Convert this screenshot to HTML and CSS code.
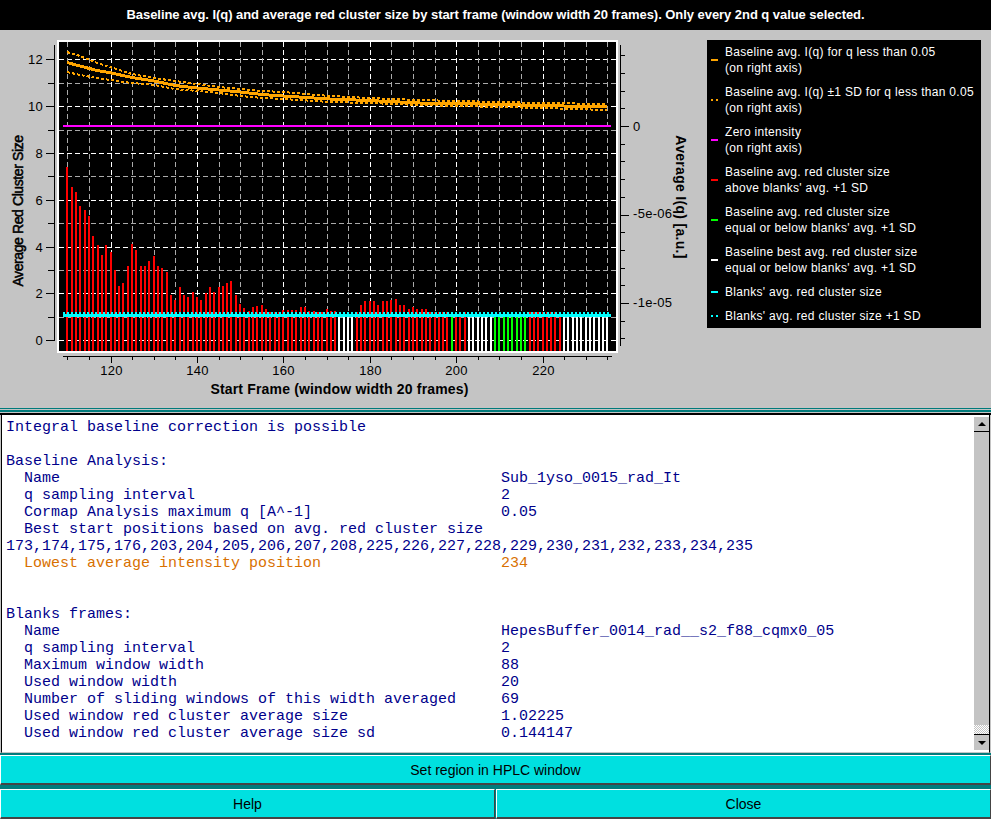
FILE: index.html
```html
<!DOCTYPE html>
<html>
<head>
    <title>Baseline analysis</title>
    <link rel="stylesheet" href="styles.css">
</head>
<body>
    <div class="window">
        <div class="title-bar">Baseline avg. I(q) and average red cluster size by start frame (window width 20 frames). Only every 2nd q value selected.</div>

        <div class="plot-panel">
            <svg id="chart" class="chart" width="700" height="378" viewBox="0 30 700 378"></svg>

            <div class="legend">
                <div class="legend-row"><span class="swatch swatch-orange"></span><span>Baseline avg. I(q) for q less than 0.05<br>(on right axis)</span></div>
                <div class="legend-row"><span class="swatch swatch-dots swatch-dots-orange"></span><span>Baseline avg. I(q) ±1 SD for q less than 0.05<br>(on right axis)</span></div>
                <div class="legend-row"><span class="swatch swatch-magenta"></span><span>Zero intensity<br>(on right axis)</span></div>
                <div class="legend-row"><span class="swatch swatch-red"></span><span>Baseline avg. red cluster size<br>above blanks' avg. +1 SD</span></div>
                <div class="legend-row"><span class="swatch swatch-green"></span><span>Baseline avg. red cluster size<br>equal or below blanks' avg. +1 SD</span></div>
                <div class="legend-row"><span class="swatch swatch-white"></span><span>Baseline best avg. red cluster size<br>equal or below blanks' avg. +1 SD</span></div>
                <div class="legend-row"><span class="swatch swatch-cyan"></span><span>Blanks' avg. red cluster size</span></div>
                <div class="legend-row"><span class="swatch swatch-dots swatch-dots-cyan"></span><span>Blanks' avg. red cluster size +1 SD</span></div>
            </div>
        </div>

        <div class="divider"></div>

        <div class="report">
            <pre class="report-text">Integral baseline correction is possible

Baseline Analysis:
  Name                                                 Sub_1yso_0015_rad_It
  q sampling interval                                  2
  Cormap Analysis maximum q [A^-1]                     0.05
  Best start positions based on avg. red cluster size
173,174,175,176,203,204,205,206,207,208,225,226,227,228,229,230,231,232,233,234,235
<span class="highlight">  Lowest average intensity position                    234</span>


Blanks frames:
  Name                                                 HepesBuffer_0014_rad__s2_f88_cqmx0_05
  q sampling interval                                  2
  Maximum window width                                 88
  Used window width                                    20
  Number of sliding windows of this width averaged     69
  Used window red cluster average size                 1.02225
  Used window red cluster average size sd              0.144147</pre>
            <div class="scrollbar">
                <div class="scroll-btn"><span class="arrow-up"></span></div>
                <div class="scroll-thumb"></div>
                <div class="scroll-gap"></div>
                <div class="scroll-btn scroll-btn-down"><span class="arrow-down"></span></div>
            </div>
        </div>

        <div class="button-row"><button class="cyan-button">Set region in HPLC window</button></div>
        <div class="button-row button-row-split">
            <button class="cyan-button">Help</button>
            <button class="cyan-button">Close</button>
        </div>
    </div>

    <script src="chart.js"></script>
</body>
</html>
```

FILE: styles.css
```css
* {
    box-sizing: border-box;
}

body {
    margin: 0;
    padding: 0;
    background-color: #c4c4c4;
    font-family: "Liberation Sans", Arial, sans-serif;
}

.window {
    width: 991px;
    height: 819px;
    display: flex;
    flex-direction: column;
    overflow: hidden;
}

.title-bar {
    height: 30px;
    flex: none;
    background-color: #000000;
    color: #ffffff;
    font-size: 13px;
    font-weight: bold;
    letter-spacing: -0.05px;
    line-height: 30px;
    text-align: center;
    white-space: nowrap;
}

.plot-panel {
    height: 378px;
    flex: none;
    display: flex;
    background-color: #c4c4c4;
}

.chart {
    display: block;
    flex: none;
}

.chart text {
    font-family: "Liberation Sans", Arial, sans-serif;
    fill: #000000;
}

.tick-label {
    font-size: 13px;
    letter-spacing: 0.3px;
}

.axis-title {
    font-size: 14px;
    font-weight: bold;
    letter-spacing: 0.17px;
}

.axis-title-left {
    font-size: 14px;
    letter-spacing: -0.4px;
    stroke: #000000;
    stroke-width: 0.5px;
}

.axis-title-right {
    font-size: 14px;
    font-weight: bold;
    letter-spacing: 0.3px;
}

.legend {
    width: 274px;
    height: 288px;
    margin: 10px 0 0 7px;
    padding: 4px 0;
    background-color: #000000;
    color: #ffffff;
    font-size: 12px;
    letter-spacing: 0.3px;
    line-height: 16px;
    display: flex;
    flex-direction: column;
    gap: 8px;
}

.legend-row {
    display: flex;
    align-items: center;
    gap: 7px;
    padding-left: 4px;
    white-space: nowrap;
}

.swatch {
    width: 7px;
    height: 2px;
    flex: none;
}

.swatch-orange { background-color: #ffa500; }
.swatch-magenta { background-color: #ff00ff; }
.swatch-red { background-color: #ff0000; }
.swatch-green { background-color: #00ff00; }
.swatch-white { background-color: #ffffff; }
.swatch-cyan { background-color: #00ffff; }

.swatch-dots-orange {
    background: repeating-linear-gradient(90deg, #ffa500 0 2px, #000000 2px 5px);
}

.swatch-dots-cyan {
    background: repeating-linear-gradient(90deg, #00ffff 0 2px, #000000 2px 5px);
}

.divider {
    height: 7px;
    background: linear-gradient(#007b7b 0 1px, #c4c4c4 1px 2px, #007b7b 2px 4px, #c4c4c4 4px 5px, #000000 5px 7px);
    flex: none;
}

.report {
    height: 338px;
    flex: none;
    display: flex;
    margin: 0 1px;
    border-left: 1px solid #000000;
    border-right: 1px solid #000000;
    border-bottom: 1px solid #c4c4c4;
    background-color: #ffffff;
}

.report-text {
    flex: 1;
    margin: 0;
    padding: 4px 0 0 4px;
    font-family: "Liberation Mono", "Courier New", monospace;
    font-size: 15px;
    line-height: 17px;
    color: #00008b;
    white-space: pre;
    overflow: hidden;
}

.highlight {
    color: #d87000;
}

.scrollbar {
    width: 16px;
    flex: none;
    display: flex;
    flex-direction: column;
    padding: 2px 0 2px 1px;
}

.scroll-btn {
    height: 15px;
    flex: none;
    background-color: #c4c4c4;
    border-bottom: 1px solid #000000;
    display: flex;
    align-items: center;
    justify-content: center;
}

.scroll-btn-down {
    height: 16px;
    border-bottom: none;
    border-top: 1px solid #000000;
}

.arrow-up, .arrow-down {
    width: 0;
    height: 0;
    border-left: 4px solid transparent;
    border-right: 4px solid transparent;
}

.arrow-up {
    border-bottom: 4px solid #000000;
}

.arrow-down {
    border-top: 4px solid #000000;
}

.scroll-thumb {
    flex: 1;
    background-color: #c4c4c4;
}

.scroll-gap {
    height: 9px;
    flex: none;
    background: repeating-conic-gradient(#c4c4c4 0 25%, #ffffff 0 50%) 0 0 / 2px 2px;
}

.button-row {
    height: 32px;
    flex: none;
    display: flex;
    gap: 1px;
    padding-top: 2px;
    background-color: #007b7b;
}

.button-row-split {
    height: 34px;
    padding-top: 4px;
}

.cyan-button {
    flex: 1;
    margin: 0;
    padding: 0;
    background-color: #00e0e0;
    color: #000000;
    font-family: "Liberation Sans", Arial, sans-serif;
    font-size: 14px;
    border: none;
    border-top: 1px solid #ffffff;
    border-left: 1px solid #ffffff;
    border-bottom: 2px solid #444444;
    border-right: 1px solid #444444;
}
```

FILE: chart.js
```js
const NS = "http://www.w3.org/2000/svg";
const svg = document.getElementById("chart");

const COLORS = {
    orange: "#ffa500",
    magenta: "#ff00ff",
    red: "#ff0000",
    green: "#00ff00",
    white: "#ffffff",
    cyan: "#00ffff",
    gray: "#aaaaaa"
};

// px position of a frame / of a left axis value
const frameX = f => 110.5 + (f - 120) * 4.32;
const sizeY = v => 340.3 - v * 23.42;
const intensityY = v => 126 + v * 17.7;

function add(tag, attrs, text) {
    const el = document.createElementNS(NS, tag);
    for (const key in attrs) {
        el.setAttribute(key, attrs[key]);
    }
    if (text !== undefined) {
        el.textContent = text;
    }
    svg.appendChild(el);
    return el;
}

function line(x1, y1, x2, y2, color, width, dash) {
    const attrs = { x1, y1, x2, y2, stroke: color, "stroke-width": width || 1 };
    if (dash) {
        attrs["stroke-dasharray"] = dash;
    }
    return add("line", attrs);
}

// plot background
add("rect", { x: 58, y: 41, width: 559, height: 311, fill: "#000000", stroke: "#ffffff", "stroke-width": 2 });

// grid
for (let v = 1; v <= 12; v++) {
    const major = v % 2 === 0;
    const y = Math.round(sizeY(v)) + 0.5;
    line(59, y, 616, y, major ? COLORS.white : COLORS.gray, 1, "5 3");
}
line(59, 340.5, 616, 340.5, COLORS.white, 1, "5 3");
for (let f = 110; f <= 235; f += 5) {
    const major = f % 20 === 0;
    const x = Math.round(frameX(f)) + 0.5;
    line(x, 42, x, 351, major ? COLORS.white : COLORS.gray, 1, "5 3");
}

// red cluster size bars, frames 110 to 235
const sizes = [
    7.4, 6.55, 6.35, 5.73, 5.56, 5.3, 4.45, 4.07, 3.64, 4.07,
    3.77, 3.0, 2.3, 2.44, 3.17, 4.11, 3.86, 3.17, 3.17, 3.39,
    3.6, 3.17, 3.08, 2.92, 1.93, 1.72, 2.27, 1.93, 1.85, 2.06,
    1.85, 1.72, 2.0, 2.27, 2.06, 2.27, 2.3, 2.44, 2.52, 1.93,
    1.55, 1.38, 1.24, 1.42, 1.47, 1.5, 1.33, 1.2, 1.2, 1.2,
    1.28, 1.28, 1.28, 1.28, 1.42, 1.42, 1.24, 1.24, 1.2, 1.2,
    1.33, 1.24, 1.24
];
const later = {
    177: 1.2, 178: 1.5, 179: 1.67, 180: 1.67, 181: 1.67, 182: 1.5, 183: 1.67, 184: 1.67,
    185: 1.72, 186: 1.76, 187: 1.5, 188: 1.5, 189: 1.33, 190: 1.42, 191: 1.33, 192: 1.33, 193: 1.33
};
const best = [173, 174, 175, 176, 203, 204, 205, 206, 207, 208, 225, 226, 227, 228, 229, 230, 231, 232, 233, 234, 235];
const below = [199, 209, 210, 211, 212, 213, 214, 215, 216];

for (let f = 110; f <= 235; f++) {
    let color = COLORS.red;
    let value = sizes[f - 110] || later[f] || 1.2;
    if (best.includes(f)) {
        color = COLORS.white;
        value = 1.02;
    } else if (below.includes(f)) {
        color = COLORS.green;
        value = 1.12;
    }
    const top = Math.round(sizeY(value));
    add("rect", { x: Math.round(frameX(f)) - 1, y: top, width: 2, height: 351 - top, fill: color });
}

// zero intensity
line(63, 126, 611, 126, COLORS.magenta, 2);

// blanks lines
line(63, 315.5, 611, 315.5, COLORS.cyan, 3);
line(63, 313, 611, 313, COLORS.cyan, 2, "2 2");

// baseline avg I(q), main line and +/- 1 SD as control points x, main, upper, lower
const curve = [
    [67, 62.5, 52, 72],
    [80, 66, 56, 75],
    [97, 70.5, 63, 78],
    [110, 72.7, 67, 80],
    [132, 77.5, 74, 83],
    [154, 81, 78, 85],
    [175, 85.5, 81, 89],
    [197, 88, 84, 91],
    [219, 90, 87, 93],
    [240, 92, 89, 96],
    [262, 94.5, 91, 98],
    [283, 96, 92, 99],
    [330, 99, 96, 102],
    [369, 100.5, 98, 103],
    [420, 103, 100, 105],
    [456, 103.5, 101, 106],
    [500, 104.5, 102, 107],
    [542, 105.5, 103, 108],
    [607, 107, 104, 110]
];
function curvePoints(col) {
    return curve.map(p => p[0] + "," + p[col]).join(" ");
}
function curveLine(col, width, dash) {
    const attrs = { points: curvePoints(col), fill: "none", stroke: COLORS.orange, "stroke-width": width, "shape-rendering": "crispEdges" };
    if (dash) {
        attrs["stroke-dasharray"] = dash;
    }
    add("polyline", attrs);
}
curveLine(1, 3);
curveLine(2, 2, "3 2");
curveLine(3, 2, "3 2");

// left axis
line(54.5, 45, 54.5, 341, "#000000");
for (let v = 0; v <= 12; v++) {
    const y = Math.round(sizeY(v)) + 0.5;
    const major = v % 2 === 0;
    line(major ? 46 : 48, y, 54, y, "#000000");
    if (major) {
        add("text", { x: 43, y: y + 4, "text-anchor": "end", class: "tick-label" }, String(v));
    }
}

// bottom axis
line(63, 356.5, 612, 356.5, "#000000");
for (let f = 110; f <= 235; f += 5) {
    const x = Math.round(frameX(f)) + 0.5;
    const major = f % 20 === 0;
    line(x, 356, x, major ? 363 : 360, "#000000");
    if (major) {
        add("text", { x, y: 375, "text-anchor": "middle", class: "tick-label" }, String(f));
    }
}

// right axis
line(620.5, 45, 620.5, 346, "#000000");
for (let i = -4; i <= 12; i++) {
    const y = Math.round(intensityY(i)) + 0.5;
    const major = i % 5 === 0;
    line(621, y, major ? 629 : 625, y, "#000000");
}
add("text", { x: 633, y: 131, class: "tick-label" }, "0");
add("text", { x: 633, y: 218, class: "tick-label" }, "-5e-06");
add("text", { x: 633, y: 307, class: "tick-label" }, "-1e-05");

// axis titles
add("text", { x: 339.5, y: 394, "text-anchor": "middle", class: "axis-title" }, "Start Frame (window width 20 frames)");
add("text", { transform: "translate(23 211) rotate(-90)", "text-anchor": "middle", class: "axis-title-left" }, "Average Red Cluster Size");
add("text", { transform: "translate(676 197) rotate(90)", "text-anchor": "middle", class: "axis-title-right" }, "Average I(q) [a.u.]");
```
